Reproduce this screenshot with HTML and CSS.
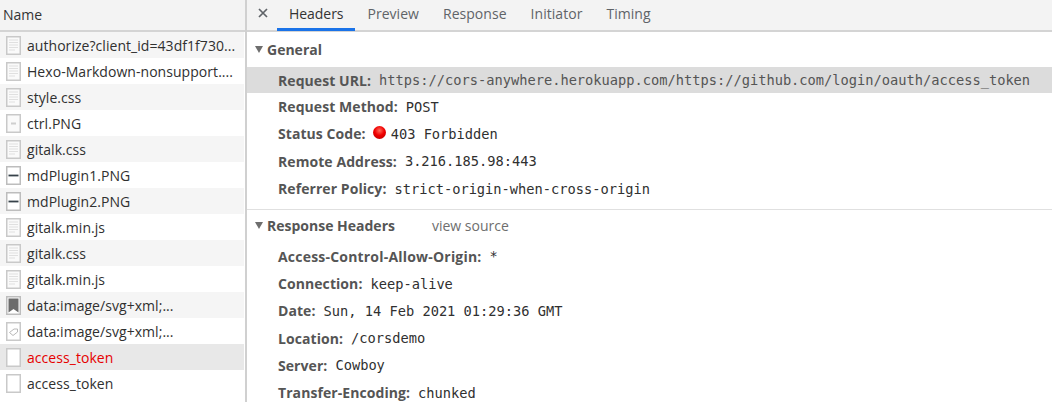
FILE: index.html
```html
<!DOCTYPE html>
<html lang="en">
<head>
<meta charset="utf-8">
<title>Network</title>
<link rel="stylesheet" href="styles.css">
</head>
<body>
<svg class="defs" width="0" height="0" aria-hidden="true">
  <symbol id="page-lines" viewBox="0 0 15 19">
    <path d="M.75.75h13.500v17.500H.75z" fill="#fafafa" stroke="#c9c9c9" stroke-width="1.500"/>
    <path d="M3 4h9M3 6.500h9M3 9h9M3 11.500h9M3 14h6" stroke="#e0e0e0" stroke-width="1.200"/>
  </symbol>
  <symbol id="page-small" viewBox="0 0 15 19">
    <path d="M.75.75h13.500v17.500H.75z" fill="#fafafa" stroke="#c9c9c9" stroke-width="1.500"/>
    <path d="M5 9.500h5" stroke="#cfcfcf" stroke-width="2"/>
  </symbol>
  <symbol id="page-dash" viewBox="0 0 15 19">
    <path d="M.75.75h13.500v17.500H.75z" fill="#fff" stroke="#bdbdbd" stroke-width="1.500"/>
    <path d="M2.500 9.500h10" stroke="#37424a" stroke-width="1.800"/>
  </symbol>
  <symbol id="page-mark" viewBox="0 0 15 19">
    <path d="M.75.75h13.500v17.500H.75z" fill="#fff" stroke="#bdbdbd" stroke-width="1.500"/>
    <path d="M2.500 2.500h10v14l-5-3.500-5 3.500z" fill="#6b6b6b"/>
  </symbol>
  <symbol id="page-tag" viewBox="0 0 15 19">
    <path d="M.75.75h13.500v17.500H.75z" fill="#fff" stroke="#c9c9c9" stroke-width="1.500"/>
    <path d="M3.500 10.500l4.500-3.500h3.500v3l-4.500 3.500z" fill="none" stroke="#b8b8b8"/>
  </symbol>
  <symbol id="page-blank" viewBox="0 0 15 19">
    <path d="M.75.75h13.500v17.500H.75z" fill="#fff" stroke="#c9c9c9" stroke-width="1.500"/>
  </symbol>
  <symbol id="close-x" viewBox="0 0 10 10">
    <path d="M1 1l8 8M9 1l-8 8" stroke="#5f6368" stroke-width="1.700" fill="none"/>
  </symbol>
</svg>
<main class="panel">
  <section class="names">
    <div class="names-head">Name</div>
    <ul class="list">
      <li class="row"><svg class="file"><use href="#page-lines"/></svg><span class="fname">authorize?client_id=43df1f730...</span></li>
      <li class="row"><svg class="file"><use href="#page-lines"/></svg><span class="fname">Hexo-Markdown-nonsupport....</span></li>
      <li class="row"><svg class="file"><use href="#page-lines"/></svg><span class="fname">style.css</span></li>
      <li class="row"><svg class="file"><use href="#page-small"/></svg><span class="fname">ctrl.PNG</span></li>
      <li class="row"><svg class="file"><use href="#page-lines"/></svg><span class="fname">gitalk.css</span></li>
      <li class="row"><svg class="file"><use href="#page-dash"/></svg><span class="fname">mdPlugin1.PNG</span></li>
      <li class="row"><svg class="file"><use href="#page-dash"/></svg><span class="fname">mdPlugin2.PNG</span></li>
      <li class="row"><svg class="file"><use href="#page-lines"/></svg><span class="fname">gitalk.min.js</span></li>
      <li class="row"><svg class="file"><use href="#page-lines"/></svg><span class="fname">gitalk.css</span></li>
      <li class="row"><svg class="file"><use href="#page-lines"/></svg><span class="fname">gitalk.min.js</span></li>
      <li class="row"><svg class="file"><use href="#page-mark"/></svg><span class="fname">data:image/svg+xml;...</span></li>
      <li class="row"><svg class="file"><use href="#page-tag"/></svg><span class="fname">data:image/svg+xml;...</span></li>
      <li class="row selected"><svg class="file"><use href="#page-blank"/></svg><span class="fname failed">access_token</span></li>
      <li class="row"><svg class="file"><use href="#page-blank"/></svg><span class="fname">access_token</span></li>
    </ul>
  </section>
  <section class="detail">
    <nav class="tabs">
      <svg class="close"><use href="#close-x"/></svg>
      <span class="tab active">Headers</span>
      <span class="tab">Preview</span>
      <span class="tab">Response</span>
      <span class="tab">Initiator</span>
      <span class="tab">Timing</span>
    </nav>
    <div class="group">
      <h2 class="group-title"><span class="arrow"></span>General</h2>
      <div class="kv hl"><b>Request URL:</b><code>https://cors-anywhere.herokuapp.com/https://github.com/login/oauth/access_token</code></div>
      <div class="kv"><b>Request Method:</b><code>POST</code></div>
      <div class="kv"><b>Status Code:</b><span class="dot"></span><code>403 Forbidden</code></div>
      <div class="kv"><b>Remote Address:</b><code>3.216.185.98:443</code></div>
      <div class="kv"><b>Referrer Policy:</b><code>strict-origin-when-cross-origin</code></div>
    </div>
    <div class="group second">
      <h2 class="group-title"><span class="arrow"></span>Response Headers<span class="source">view source</span></h2>
      <div class="kv"><b class="wide">Access-Control-Allow-Origin:</b><code>*</code></div>
      <div class="kv"><b>Connection:</b><code>keep-alive</code></div>
      <div class="kv"><b>Date:</b><code>Sun, 14 Feb 2021 01:29:36 GMT</code></div>
      <div class="kv"><b>Location:</b><code>/corsdemo</code></div>
      <div class="kv"><b>Server:</b><code>Cowboy</code></div>
      <div class="kv"><b>Transfer-Encoding:</b><code>chunked</code></div>
    </div>
  </section>
</main>
</body>
</html>
```
FILE: styles.css
```css
* { box-sizing: border-box; }
html, body { margin: 0; height: 100%; overflow: hidden; background: #fff; }
body { font-family: "Open Sans", "Noto Sans", sans-serif; color: #303030; }
.defs { position: absolute; }
.panel { display: flex; height: 402px; width: 1052px; overflow: hidden; }
.names { width: 247px; flex: none; border-right: 2px solid #d0d0d0; }
.names-head {
  height: 32px; padding-left: 3px; font-size: 14px; line-height: 30px;
  background: #f3f3f3; border-bottom: 2px solid #d4d4d4; color: #333;
}
.list { list-style: none; margin: 0; padding: 0; }
.row { height: 26px; display: flex; align-items: center; padding-left: 6px; width: 244px; }
.row:nth-child(odd) { background: #f5f5f5; }
.row.selected { background: #e8e8e8; }
.file { width: 15px; height: 19px; flex: none; margin-right: 6px; }
.fname { font-size: 14px; letter-spacing: 0.05px; white-space: nowrap; color: #303030; }
.failed { color: #e60000; }
.detail { flex: 1; min-width: 0; }
.tabs {
  height: 32px; display: flex; align-items: flex-start; background: #f3f3f3;
  border-bottom: 2px solid #d4d4d4; padding-left: 11px;
}
.close { width: 10px; height: 10px; margin: 8px 9px 0 0; flex: none; }
.tab {
  height: 31px; padding: 0 12px; font-size: 14px; line-height: 28px; color: #5f6368;
  letter-spacing: 0.04px;
}
.tab.active { color: #333; border-bottom: 3px solid #1a73e8; letter-spacing: -0.05px; }
.group { padding: 4px 0 7px; border-bottom: 1px solid #e0e0e0; }
.group.second { border-bottom: 0; padding-top: 2px; }
.group-title {
  margin: 0 0 5px; height: 26px; display: flex; align-items: center; padding-left: 8px;
  font-size: 14px; font-weight: 700; color: #555;
}
.second .group-title { margin-bottom: 4.400px; }
.arrow {
  width: 0; height: 0; margin-right: 4px;
  border-left: 4.500px solid transparent; border-right: 4.500px solid transparent; border-top: 7px solid #6e6e6e;
}
.source { margin-left: 37px; font-weight: 400; color: #6e6e6e; }
.kv { height: 27.300px; display: flex; align-items: center; padding-left: 31px; white-space: nowrap; }
.kv.hl { background: #dcdcdc; height: 26px; }
.kv b { font-size: 14px; font-weight: 700; color: #555; letter-spacing: 0.07px; margin-right: 8px; }
.kv b.wide { letter-spacing: 0.2px; }
.kv code { font-family: "DejaVu Sans Mono", monospace; font-size: 13.700px; color: #303030; }
.kv.hl code { color: #555; }
.dot {
  width: 13px; height: 13px; border-radius: 50%; flex: none; margin: -3px 5px 0 -1px;
  background: radial-gradient(circle at 50% 35%, #ff6a5a 0, #f00000 45%, #b00000 100%);
}
```
